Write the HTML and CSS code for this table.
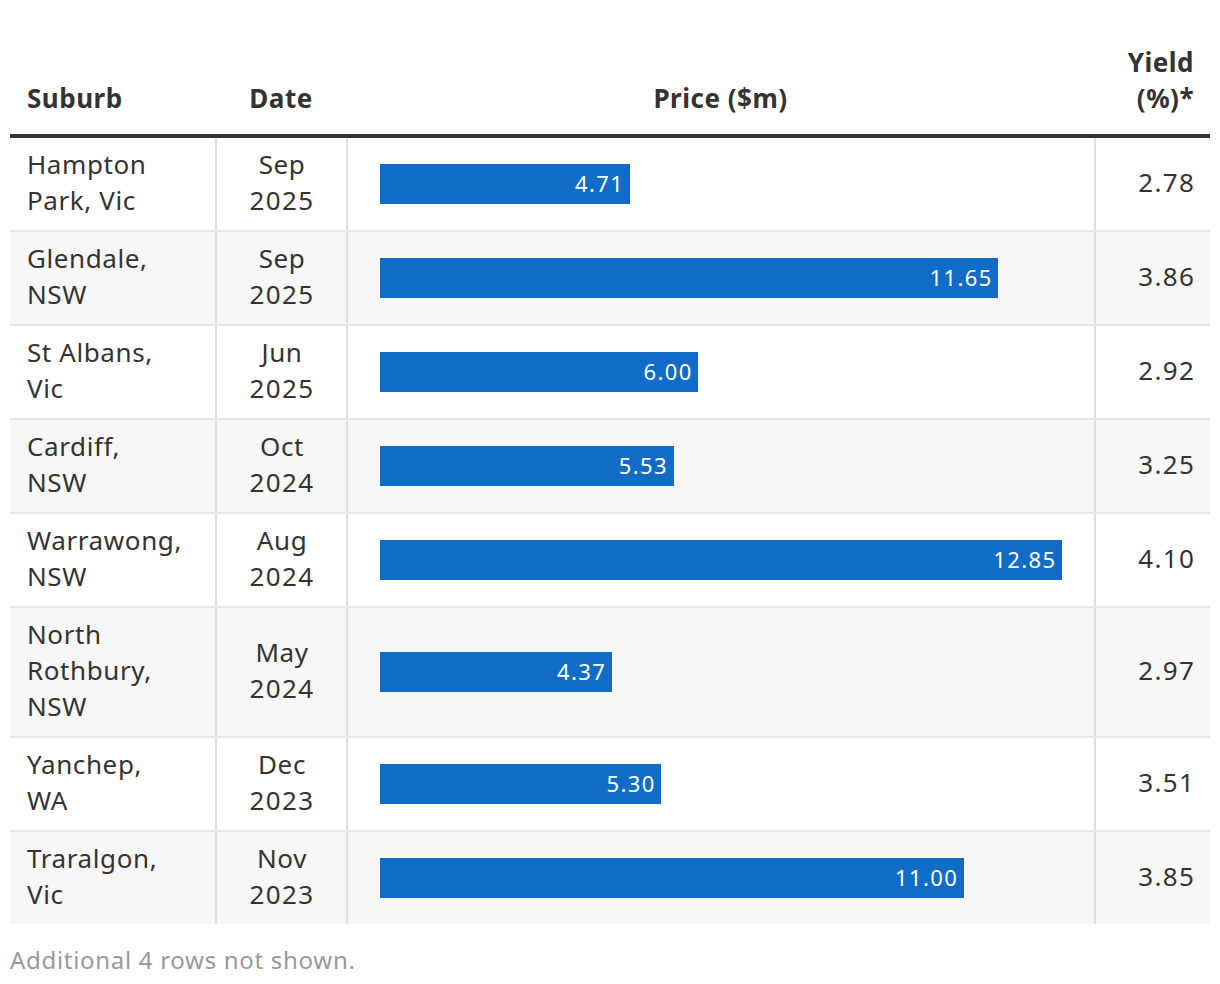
FILE: index.html
```html
<!DOCTYPE html>
<html>
<head>
<meta charset="utf-8">
<link rel="stylesheet" href="styles.css">
</head>
<body>
<div class="wrap">
  <div class="table">
    <div class="row head">
      <div class="cell c-sub">Suburb</div>
      <div class="cell c-date">Date</div>
      <div class="cell c-price">Price ($m)</div>
      <div class="cell c-yield">Yield<br>(%)*</div>
    </div>
    <div class="row">
      <div class="cell c-sub">Hampton<br>Park, Vic</div>
      <div class="cell c-date">Sep<br><span class="num">2025</span></div>
      <div class="cell c-price"><div class="bar" style="width:36.65%">4.71</div></div>
      <div class="cell c-yield"><span class="num">2.78</span></div>
    </div>
    <div class="row alt">
      <div class="cell c-sub">Glendale,<br>NSW</div>
      <div class="cell c-date">Sep<br><span class="num">2025</span></div>
      <div class="cell c-price"><div class="bar" style="width:90.66%">11.65</div></div>
      <div class="cell c-yield"><span class="num">3.86</span></div>
    </div>
    <div class="row">
      <div class="cell c-sub">St Albans,<br>Vic</div>
      <div class="cell c-date">Jun<br><span class="num">2025</span></div>
      <div class="cell c-price"><div class="bar" style="width:46.69%">6.00</div></div>
      <div class="cell c-yield"><span class="num">2.92</span></div>
    </div>
    <div class="row alt">
      <div class="cell c-sub">Cardiff,<br>NSW</div>
      <div class="cell c-date">Oct<br><span class="num">2024</span></div>
      <div class="cell c-price"><div class="bar" style="width:43.04%">5.53</div></div>
      <div class="cell c-yield"><span class="num">3.25</span></div>
    </div>
    <div class="row">
      <div class="cell c-sub">Warrawong,<br>NSW</div>
      <div class="cell c-date">Aug<br><span class="num">2024</span></div>
      <div class="cell c-price"><div class="bar" style="width:100%">12.85</div></div>
      <div class="cell c-yield"><span class="num">4.10</span></div>
    </div>
    <div class="row alt">
      <div class="cell c-sub">North<br>Rothbury,<br>NSW</div>
      <div class="cell c-date">May<br><span class="num">2024</span></div>
      <div class="cell c-price"><div class="bar" style="width:34.01%">4.37</div></div>
      <div class="cell c-yield"><span class="num">2.97</span></div>
    </div>
    <div class="row">
      <div class="cell c-sub">Yanchep,<br>WA</div>
      <div class="cell c-date">Dec<br><span class="num">2023</span></div>
      <div class="cell c-price"><div class="bar" style="width:41.25%">5.30</div></div>
      <div class="cell c-yield"><span class="num">3.51</span></div>
    </div>
    <div class="row alt last">
      <div class="cell c-sub">Traralgon,<br>Vic</div>
      <div class="cell c-date">Nov<br><span class="num">2023</span></div>
      <div class="cell c-price"><div class="bar" style="width:85.60%">11.00</div></div>
      <div class="cell c-yield"><span class="num">3.85</span></div>
    </div>
  </div>
  <p class="note">Additional 4 rows not shown.</p>
</div>
</body>
</html>
```
FILE: styles.css
```css
* { box-sizing: border-box; }
html, body { margin: 0; padding: 0; background: #fff; }
body {
  font-family: "Noto Sans", "Open Sans", sans-serif;
  color: #333;
}
.wrap { padding: 44px 10px 0 10px; }
.table { width: 1200px; }
.row {
  display: grid;
  grid-template-columns: 205px 131px 748px 116px;
  border-bottom: 2px solid #e6e6e6;
  background: #fff;
}
.row.alt { background: #f7f7f7; }
.row.last { border-bottom: none; }
.row.head {
  border-bottom: 4px solid #333;
  background: #fff;
}
.cell {
  font-size: 26px;
  letter-spacing: 0.6px;
  line-height: 36px;
  padding: 8px 16px 12px 17px;
  display: flex;
  flex-direction: column;
  justify-content: center;
}
.num { letter-spacing: 1.4px; }
.c-yield .num { margin-right: -1.4px; }
.row:not(.head) .cell + .cell { border-left: 2px solid #e0e0e0; }
.head .cell {
  font-weight: 700;
  letter-spacing: 0.5px;
  padding-top: 0;
  padding-bottom: 18px;
  justify-content: flex-end;
}
.c-date { text-align: center; align-items: center; }
.head .c-price { text-align: center; align-items: center; }
.c-yield { text-align: right; align-items: flex-end; }
.head .c-yield { padding-right: 16px; }
.row:not(.head) .c-price { padding: 10px 32px 10px 32px; align-items: flex-start; }
.bar {
  background: #116cc8;
  color: #fff;
  height: 40px;
  font-size: 22px;
  letter-spacing: 1.4px;
  line-height: 39px;
  text-align: right;
  padding-right: 5.6px;
}
.note {
  margin: 18px 0 0 0;
  font-size: 24px;
  letter-spacing: 0.7px;
  line-height: 36px;
  color: #999;
}
```
